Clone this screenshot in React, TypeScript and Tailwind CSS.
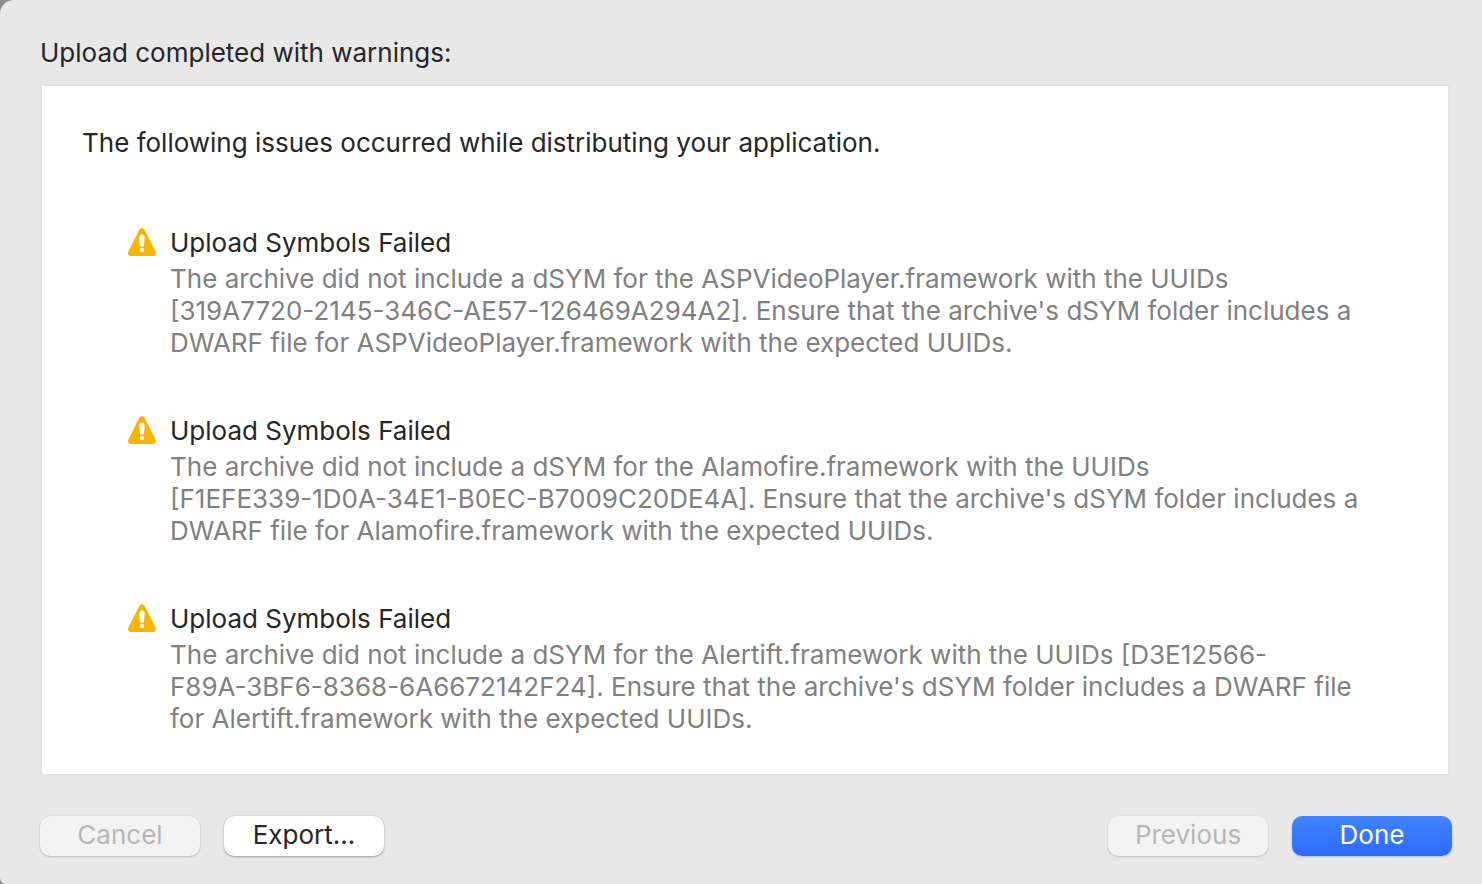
import type { ReactNode } from "react";

interface Issue {
  title: string;
  lines: string[];
}

const issues: Issue[] = [
  {
    title: "Upload Symbols Failed",
    lines: [
      "The archive did not include a dSYM for the ASPVideoPlayer.framework with the UUIDs",
      "[319A7720-2145-346C-AE57-126469A294A2]. Ensure that the archive's dSYM folder includes a",
      "DWARF file for ASPVideoPlayer.framework with the expected UUIDs.",
    ],
  },
  {
    title: "Upload Symbols Failed",
    lines: [
      "The archive did not include a dSYM for the Alamofire.framework with the UUIDs",
      "[F1EFE339-1D0A-34E1-B0EC-B7009C20DE4A]. Ensure that the archive's dSYM folder includes a",
      "DWARF file for Alamofire.framework with the expected UUIDs.",
    ],
  },
  {
    title: "Upload Symbols Failed",
    lines: [
      "The archive did not include a dSYM for the Alertift.framework with the UUIDs [D3E12566-",
      "F89A-3BF6-8368-6A6672142F24]. Ensure that the archive's dSYM folder includes a DWARF file",
      "for Alertift.framework with the expected UUIDs.",
    ],
  },
];

const WarningIcon = () => (
  <svg className="mt-px h-7 w-7 shrink-0" viewBox="0 0 28 28" aria-hidden="true">
    <path
      d="M11.2 1.9C12.4-.4 15.6-.4 16.8 1.9L27.6 23.6C28.7 25.8 27.4 28 25 28H3C.6 28-.7 25.8.4 23.6Z"
      fill="#f8b500"
    />
    <path
      d="M14 6.6C15.9 6.6 16.8 7.8 16.7 9.4L16 17C15.9 18.3 15.1 19 14 19S12.1 18.3 12 17L11.3 9.4C11.2 7.8 12.1 6.6 14 6.6Z"
      fill="#fff"
    />
    <circle cx="14" cy="22.2" r="2.1" fill="#fff" />
  </svg>
);

const variants = {
  normal:
    "bg-white text-[#262626] shadow-[0_0_1px_rgba(0,0,0,0.3),0_1px_2px_rgba(0,0,0,0.3)]",
  disabled:
    "bg-[#f3f3f3] text-[#b7b7b7] shadow-[0_0_1px_rgba(0,0,0,0.15),0_1px_2px_rgba(0,0,0,0.15)]",
  primary:
    "bg-linear-to-b from-[#4284ff] to-[#2f69ff] text-white shadow-[0_1px_2px_rgba(47,105,255,0.3)]",
};

interface DialogButtonProps {
  variant: keyof typeof variants;
  children: ReactNode;
}

const DialogButton = ({ variant, children }: DialogButtonProps) => (
  <button
    type="button"
    disabled={variant === "disabled"}
    className={`flex h-10 w-40 items-center justify-center rounded-[10px] pb-0.5 ${variants[variant]}`}
  >
    {children}
  </button>
);

export default function App() {
  return (
    <div className="min-h-screen bg-[#8a8a8a] font-['Inter',sans-serif] text-[26px] leading-8 text-[#262626]">
      <main className="flex min-h-screen flex-col rounded-tl-[14px] rounded-bl-md bg-[#e8e8e8] pt-[37px] pb-7">
        <h1 className="px-10">Upload completed with warnings:</h1>

        <section className="mt-[15px] mr-8 ml-10 grow border-2 border-[#e4e4e4] bg-white px-10 pt-[41px] pb-[39px]">
          <p>The following issues occurred while distributing your application.</p>

          <ul className="mt-[68px] flex flex-col gap-14 pl-[46px]">
            {issues.map((issue, index) => (
              <li key={index} className="flex gap-[14px]">
                <WarningIcon />
                <div>
                  <h2>{issue.title}</h2>
                  <p className="mt-1 text-[#808080]">
                    {issue.lines.map((line) => (
                      <span key={line} className="block whitespace-nowrap">
                        {line}
                      </span>
                    ))}
                  </p>
                </div>
              </li>
            ))}
          </ul>
        </section>

        <footer className="mt-10 flex justify-between pr-[30px] pl-10">
          <div className="flex gap-6">
            <DialogButton variant="disabled">Cancel</DialogButton>
            <DialogButton variant="normal">Export...</DialogButton>
          </div>
          <div className="flex gap-6">
            <DialogButton variant="disabled">Previous</DialogButton>
            <DialogButton variant="primary">Done</DialogButton>
          </div>
        </footer>
      </main>
    </div>
  );
}
